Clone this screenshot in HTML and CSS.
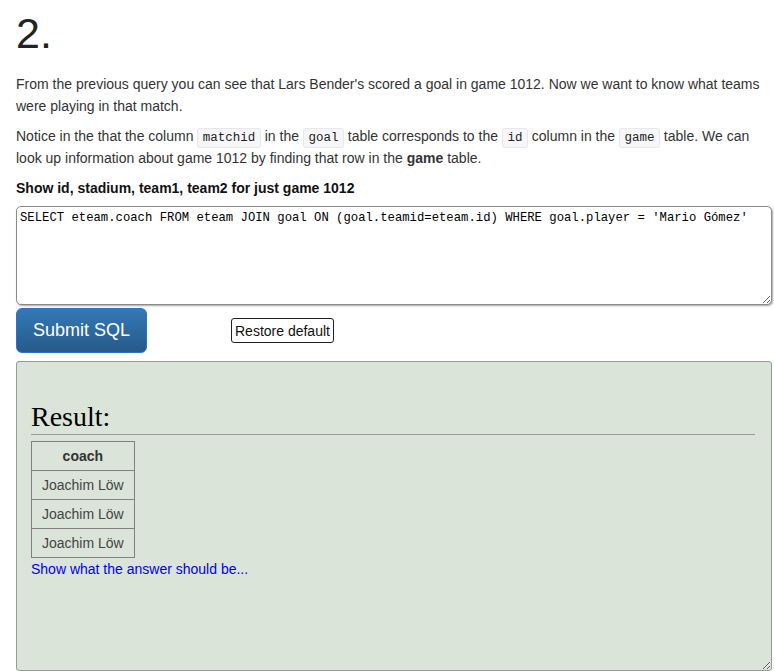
FILE: index.html
```html
<!DOCTYPE html>
<html>
<head>
<meta charset="utf-8">
<link rel="stylesheet" href="styles.css">
</head>
<body>
<div class="page">
  <h1 class="qnum">2.</h1>
  <p class="para">From the previous query you can see that Lars Bender's scored a goal in game 1012. Now we want to know what teams were playing in that match.</p>
  <p class="para">Notice in the that the column <code class="code">matchid</code> in the <code class="code">goal</code> table corresponds to the <code class="code">id</code> column in the <code class="code">game</code> table. We can look up information about game 1012 by finding that row in the <b>game</b> table.</p>
  <div class="task">Show id, stadium, team1, team2 for just game 1012</div>
  <textarea class="sql" spellcheck="false">SELECT eteam.coach FROM eteam JOIN goal ON (goal.teamid=eteam.id) WHERE goal.player = 'Mario Gómez'</textarea>
  <div class="actions">
    <button class="submit">Submit SQL</button>
    <button class="restore">Restore default</button>
  </div>
  <div class="result">
    <h2 class="result-title">Result:</h2>
    <table class="res-table">
      <tr><th>coach</th></tr>
      <tr><td>Joachim Löw</td></tr>
      <tr><td>Joachim Löw</td></tr>
      <tr><td>Joachim Löw</td></tr>
    </table>
    <a class="answer" href="#">Show what the answer should be...</a>
  </div>
</div>
</body>
</html>
```
FILE: styles.css
```css
html, body {
  margin: 0;
  padding: 0;
  background: #fff;
}
body {
  font-family: "Liberation Sans", Arial, sans-serif;
  font-size: 14px;
  color: #333;
}
.page {
  padding: 0 2px 0 16px;
}
.qnum {
  margin: 0;
  padding-top: 8px;
  font-size: 43px;
  font-weight: normal;
  line-height: 50px;
  color: #222;
  height: 65px;
}
.para {
  margin: 0 0 8px 0;
  line-height: 22px;
}
.code {
  font-family: "Liberation Mono", monospace;
  font-size: 12.5px;
  line-height: 14px;
  background: #f7f7f9;
  border: 1px solid #e8e8ec;
  border-radius: 3px;
  padding: 2px 4.5px;
  color: #222;
}
.para b {
  color: #333;
}
.task {
  font-weight: bold;
  color: #111;
  line-height: 20px;
  margin-top: 9px;
  margin-bottom: 8px;
}
.sql {
  display: block;
  box-sizing: border-box;
  width: 756px;
  height: 99px;
  margin: 0;
  padding: 3px 3px;
  border: 1px solid #8a8a8a;
  border-radius: 5px;
  box-shadow: 1px 1px 2px rgba(0,0,0,0.35);
  font-family: "Liberation Mono", monospace;
  font-size: 12.25px;
  line-height: 16px;
  color: #000;
  background: #fff;
  resize: both;
}
.actions {
  display: flex;
  align-items: center;
  margin-top: 3px;
  height: 45px;
}
.submit {
  box-sizing: border-box;
  width: 131px;
  height: 45px;
  border: 1px solid #2e6fcf;
  border-radius: 6px;
  background: linear-gradient(#3479b5, #265a8a);
  color: #fff;
  font-family: "Liberation Sans", Arial, sans-serif;
  font-size: 18px;
  padding: 0;
}
.restore {
  box-sizing: border-box;
  margin-left: 84px;
  height: 25px;
  padding: 0 3px;
  border: 1px solid #222;
  border-radius: 3px;
  background: #fff;
  color: #111;
  font-family: "Liberation Sans", Arial, sans-serif;
  font-size: 14px;
  margin-top: 0;
}
.result {
  box-sizing: border-box;
  margin-top: 8px;
  width: 756px;
  height: 310px;
  background: #dae4d9;
  border: 1px solid #999;
  border-radius: 3px;
  padding: 38px 16px 0 14px;
  overflow: auto;
  resize: both;
}
.result-title {
  margin: 0;
  font-family: "Liberation Serif", Georgia, serif;
  font-weight: normal;
  font-size: 28px;
  line-height: 34px;
  color: #000;
  padding-bottom: 0;
  border-bottom: 1px solid #999;
}
.res-table {
  margin-top: 6px;
  border-collapse: collapse;
}
.res-table th,
.res-table td {
  border: 1px solid #808080;
  height: 28px;
  padding: 0 10px;
  text-align: center;
  color: #444;
  font-size: 14px;
}
.res-table th {
  font-weight: bold;
  color: #333;
}
.answer {
  display: block;
  color: #0000ee;
  text-decoration: none;
  line-height: 22px;
  margin-top: 0;
}
```
